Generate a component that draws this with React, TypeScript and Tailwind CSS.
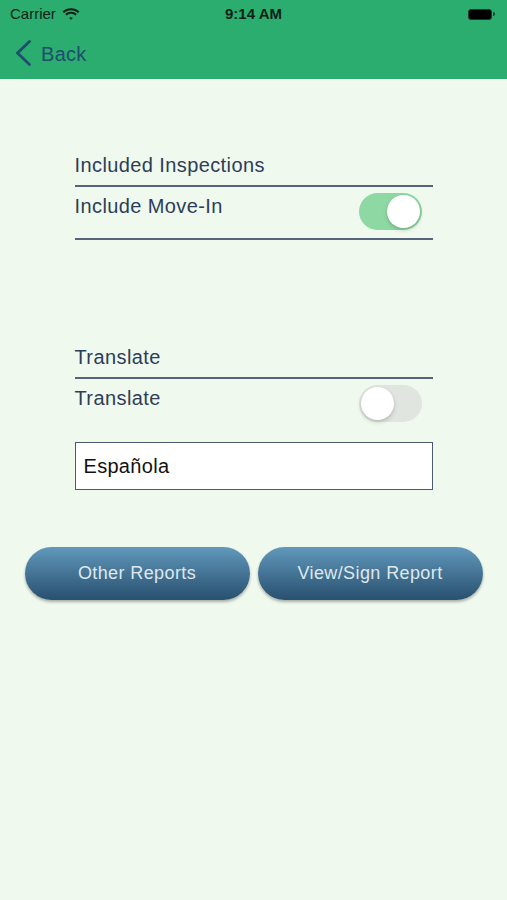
function Toggle({ on }: { on: boolean }) {
  return (
    <div
      className={`w-[63px] h-[37px] rounded-full p-[2px] flex ${
        on ? "bg-[#8ed9a3] justify-end" : "bg-[#e1e5df] justify-start"
      }`}
    >
      <div className="w-[33px] h-[33px] rounded-full bg-white shadow-[0_2px_4px_rgba(0,0,0,0.2)]" />
    </div>
  );
}

function Section({ title, label, on }: { title: string; label: string; on: boolean }) {
  return (
    <div>
      <div className="h-[24px] leading-[24px] text-[20px] tracking-[0.4px] text-[#2e3d58]">{title}</div>
      <div className="mt-[8px] h-[2px] bg-[#56637a]" />
      <div className="mt-[6px] flex items-start justify-between pr-[11px]">
        <span className="mt-[1px] h-[24px] leading-[24px] text-[20px] tracking-[0.4px] text-[#2e3d58]">{label}</span>
        <Toggle on={on} />
      </div>
    </div>
  );
}

export default function App() {
  return (
    <div className="min-h-[900px] bg-[#eff9ee] font-['Liberation_Sans',Arial,sans-serif]">
      {/* Header */}
      <div className="bg-[#2aad6e] h-[79px]">
        <div className="h-[28px] relative flex items-center px-[10px]">
          <span className="text-[15px] text-[#0f1f16] font-medium">Carrier</span>
          <svg className="ml-[6px]" width="18" height="14" viewBox="0 0 17 13">
            <path d="M8.5 3 C11 3 13.3 4 15 5.6 L16.5 4.1 C14.4 2.1 11.6 1 8.5 1 C5.4 1 2.6 2.1 0.5 4.1 L2 5.6 C3.7 4 6 3 8.5 3 Z" fill="#0f1f16" />
            <path d="M8.5 6.3 C10.1 6.3 11.5 6.9 12.6 7.9 L14 6.5 C12.5 5.1 10.6 4.3 8.5 4.3 C6.4 4.3 4.5 5.1 3 6.5 L4.4 7.9 C5.5 6.9 6.9 6.3 8.5 6.3 Z" fill="#0f1f16" />
            <path d="M8.5 9.5 C9.2 9.5 9.8 9.8 10.2 10.2 L8.5 12 L6.8 10.2 C7.2 9.8 7.8 9.5 8.5 9.5 Z" fill="#0f1f16" />
          </svg>
          <span className="absolute left-1/2 -translate-x-1/2 text-[15px] font-bold text-[#0f1f16]">9:14 AM</span>
          <div className="ml-auto mr-[2px] flex items-center">
            <div className="w-[24px] h-[11px] rounded-[3px] bg-black border border-[#1c3a2a]" />
            <div className="w-[2px] h-[4px] bg-[#1c3a2a] rounded-r-sm ml-[1px]" />
          </div>
        </div>
        <div className="h-[51px] flex items-center pl-[15px]">
          <svg width="17" height="26" viewBox="0 0 17 26" className="-mt-[1px]">
            <path d="M14.5 1.5 L2.5 13 L14.5 24.5" fill="none" stroke="#1f4e6c" strokeWidth="2.8" strokeLinecap="round" strokeLinejoin="round" />
          </svg>
          <span className="ml-[9px] text-[20px] tracking-[0.3px] text-[#1f4e6c]">Back</span>
        </div>
      </div>

      {/* Body */}
      <div className="w-[358px] mx-auto pt-[74px]">
        <Section title="Included Inspections" label="Include Move-In" on={true} />
        <div className="mt-[8px] h-[2px] bg-[#56637a]" />

        <div className="mt-[105px]">
          <Section title="Translate" label="Translate" on={false} />
        </div>

        <div className="mt-[20px] h-[48px] bg-white border-[1.5px] border-[#4b5971] flex items-center px-[8px]">
          <span className="text-[20px] tracking-[0.3px] text-[#111]">Española</span>
        </div>
      </div>

      <div className="mt-[57px] flex justify-center gap-[8px]">
        <button className="w-[225px] h-[53px] rounded-full bg-gradient-to-b from-[#6199bc] to-[#29506f] shadow-[0_2px_3px_rgba(0,0,0,0.3)] text-[18px] tracking-[0.4px] text-[#dde9ef]">
          Other Reports
        </button>
        <button className="w-[225px] h-[53px] rounded-full bg-gradient-to-b from-[#6199bc] to-[#29506f] shadow-[0_2px_3px_rgba(0,0,0,0.3)] text-[18px] tracking-[0.4px] text-[#dde9ef]">
          View/Sign Report
        </button>
      </div>
    </div>
  );
}
